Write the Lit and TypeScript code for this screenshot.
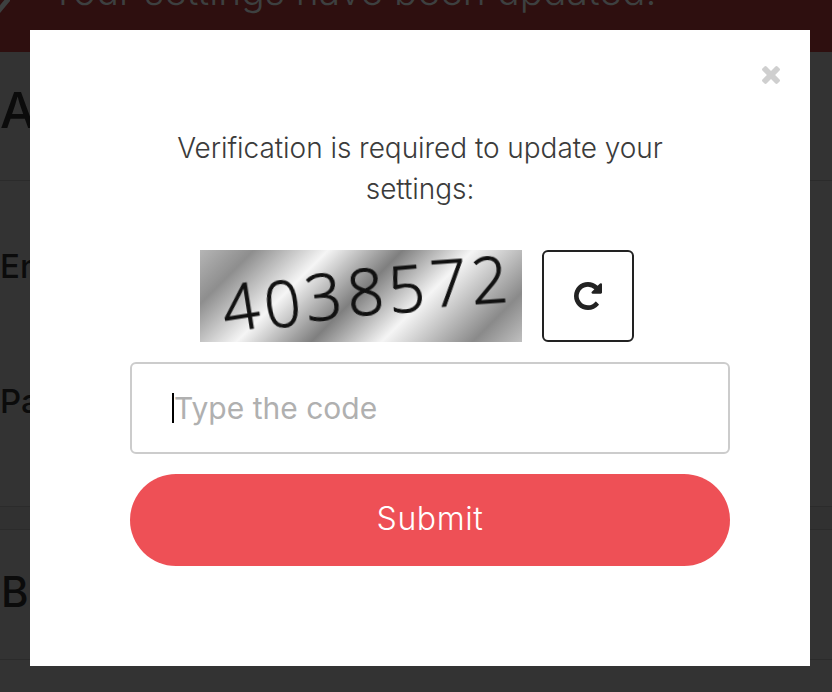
import { LitElement, html, css } from "lit";
import { customElement } from "lit/decorators.js";

const DIGITS = [
  { c: "4", r: -9, y: 10 },
  { c: "0", r: -7, y: 7 },
  { c: "3", r: -6, y: 0 },
  { c: "8", r: -5, y: -5 },
  { c: "5", r: -5, y: -8 },
  { c: "7", r: -4, y: -14 },
  { c: "2", r: -4, y: -17 },
];

@customElement("app-root")
export class AppRoot extends LitElement {
  static styles = css`
    :host { display: block; width: 832px; height: 692px; position: relative; overflow: hidden; background: #333; font-family: "Inter", "Liberation Sans", sans-serif; }
    .banner { height: 52px; background: #2e0f0f; overflow: hidden; display: flex; gap: 14px; }
    .banner svg { flex: none; }
    .banner span { font-size: 39px; line-height: 50px; margin-top: -34px; color: #3d4040; white-space: nowrap; margin-left: 26px; font-weight: 300; }
    .sec { border-bottom: 1px solid #2b2b2b; color: #0b0b0b; box-sizing: border-box; }
    .h { font-size: 50px; font-weight: 500; line-height: 56px; }
    .s1 { height: 129px; padding-top: 30px; }
    .s2 { height: 326px; padding-top: 65px; font-size: 33px; font-weight: 500; line-height: 40px; display: flex; flex-direction: column; gap: 95px; }
    .band { height: 23px; background: #313131; border-bottom: 1px solid #2b2b2b; box-sizing: border-box; }
    .s3 { height: 130px; padding-top: 34px; font-size: 42px; padding-left: 1px; }
    .modal { position: absolute; left: 30px; top: 30px; width: 780px; height: 636px; background: #fff; display: flex; flex-direction: column; align-items: center; box-sizing: border-box; padding-top: 98px; color: #3b3b3b; }
    .close { position: absolute; left: 732px; top: 36px; width: 18px; height: 18px; }
    .msg { width: 520px; text-align: center; font-size: 28px; line-height: 41px; margin: 0; font-weight: 300; letter-spacing: -0.05px; }
    .cap { display: flex; gap: 20px; margin-top: 40px; margin-right: 6px; }
    .img { width: 322px; height: 92px; background: linear-gradient(135deg, #b5b5b5 0%, #8e8e8e 13%, #f5f5f5 31%, #7f7f7f 49%, #f5f5f5 66%, #8a8a8a 88%, #c0c0c0 100%); display: flex; justify-content: center; align-items: center; gap: 5px; padding-left: 8px; box-sizing: border-box; font-size: 64px; color: #111; }
    .d { display: inline-block; font-family: "Open Sans", sans-serif; font-weight: 300; line-height: 60px; filter: blur(0.4px); -webkit-text-stroke: 1.1px #111; }
    .refresh { width: 92px; height: 92px; box-sizing: border-box; border: 2px solid #222; border-radius: 6px; background: #fff; display: flex; align-items: center; justify-content: center; }
    .refresh svg { width: 28px; height: 28px; }
    .input { width: 600px; height: 92px; margin-top: 20px; margin-left: 20px; box-sizing: border-box; border: 2px solid #ccc; border-radius: 6px; display: flex; align-items: center; padding-left: 40px; font-size: 30px; font-weight: 400; color: #b0b0b0; }
    .caret { width: 2px; height: 30px; background: #000; }
    .submit { width: 600px; height: 92px; margin-top: 20px; margin-left: 20px; border: none; border-radius: 46px; background: #ee5056; color: #fff; font-size: 32px; letter-spacing: 0.6px; font-family: "Inter", sans-serif; font-weight: 300; padding: 0 0 3px; }
  `;

  render() {
    return html`
      <div class="banner">
        <svg width="10" height="20" viewBox="0 0 10 20"><path d="M-4 14 L10 -3" fill="none" stroke="#3d4040" stroke-width="5"/></svg>
        <span>Your settings have been updated.</span>
      </div>
      <div>
        <div class="sec s1 h">Account</div>
        <div class="sec s2"><div>Email</div><div>Password</div></div>
        <div class="band"></div>
        <div class="sec s3 h">Billing</div>
      </div>
      <div class="modal">
        <svg class="close" viewBox="110 258 1188 1188"><path fill="#cfcfcf" d="M1298 1214q0 40-28 68l-136 136q-28 28-68 28t-68-28l-294-294-294 294q-28 28-68 28t-68-28l-136-136q-28-28-28-68t28-68l294-294-294-294q-28-28-28-68t28-68l136-136q28-28 68-28t68 28l294 294 294-294q28-28 68-28t68 28l136 136q28 28 28 68t-28 68l-294 294 294 294q28 28 28 68z"/></svg>
        <p class="msg">Verification is required to update your settings:</p>
        <div class="cap">
          <div class="img">
            ${DIGITS.map((d) => html`<span class="d" style="transform: translateY(${d.y}px) rotate(${d.r}deg)">${d.c}</span>`)}
          </div>
          <div class="refresh">
            <svg viewBox="0 128 1536 1536"><path fill="#222" d="M1536 256v448q0 26-19 45t-45 19h-448q-42 0-59-40-17-39 14-69l138-138q-148-137-349-137-104 0-198.5 40.5t-163.5 109.5-109.5 163.5-40.5 198.5 40.5 198.5 109.5 163.5 163.5 109.5 198.5 40.5q119 0 225-52t179-147q7-10 23-12 15 0 25 9l137 138q9 8 9.5 20.5t-7.5 22.5q-109 132-264 204.5t-327 72.5q-156 0-298-61t-245-164-164-245-61-298 61-298 164-245 245-164 298-61q147 0 284.5 55.5t244.5 156.5l130-129q29-31 70-14 39 17 39 59z"/></svg>
          </div>
        </div>
        <div class="input"><span class="caret"></span>Type the code</div>
        <button class="submit">Submit</button>
      </div>
    `;
  }
}
